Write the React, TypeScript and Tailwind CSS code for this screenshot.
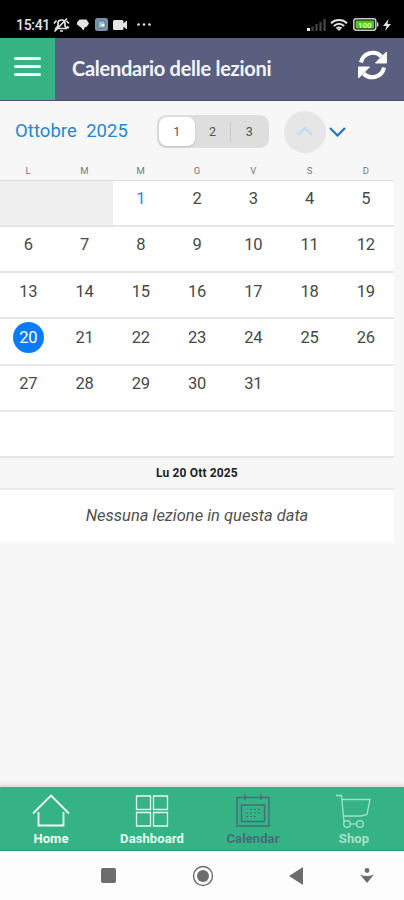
import React, { useState } from 'react';
import clsx from 'clsx';

const WEEKDAYS = ['L', 'M', 'M', 'G', 'V', 'S', 'D'];
const DAYS_IN_MONTH = 31;
const FIRST_OFFSET = 2;
const TODAY = 20;
const ROWS = 6;

const StatusBar = () => (
  <div className="flex h-[38px] shrink-0 items-center bg-black pl-4 pr-[13px] pt-[11px] text-[#e4e4e4]">
    <span className="w-[35px] whitespace-nowrap text-[14px] font-medium leading-none tracking-[-0.3px]">15:41</span>
    {/* muted bell */}
    <svg className="ml-[2px] h-4 w-[18px]" viewBox="0 0 18 16" fill="none" stroke="currentColor" strokeWidth="1.7">
      <path d="M3 11.500h10.500L12 9V6.500C12 4 10.500 3 8.500 3S5 4.500 5 6.500V9zM7 14h3M1.500 14.500 14 1.500M1 6.500l2.500-3M13.500 4l2.500 2.500M14 9.500l2 1.500" />
    </svg>
    <svg className="ml-[6px] h-3 w-3" viewBox="0 0 12 12" fill="currentColor">
      <path d="M2.500.5h7L12 4.500 9.500 8H8l-1.500 3.500L4 8.500 0 5.500V3.500z" />
    </svg>
    <svg className="ml-[6px] h-[13px] w-[13px]" viewBox="0 0 13 13">
      <rect width="13" height="13" rx="2.500" fill="#7595ac" />
      <rect x="3" y="3" width="7" height="7" rx="1.500" fill="#a5bdcb" stroke="#54758c" />
      <rect x="6.500" y="6" width="3" height="2.500" fill="#f1f5f7" />
    </svg>
    <svg className="ml-[5px] h-[10px] w-[15px]" viewBox="0 0 15 10" fill="currentColor">
      <rect width="10.500" height="10" rx="1.500" />
      <path d="m9 4.500 5-4v9l-5-4z" />
    </svg>
    <svg className="ml-[9px] h-[3px] w-[15px]" viewBox="0 0 15 3" fill="currentColor">
      <circle cx="1.500" cy="1.500" r="1.300" />
      <circle cx="7" cy="1.500" r="1.300" />
      <circle cx="12.500" cy="1.500" r="1.300" />
    </svg>

    <svg className="ml-auto h-3 w-[19px]" viewBox="0 0 19 12">
      <rect y="9" width="3" height="3" fill="#eee" />
      <path d="M5.500 12V7.500M9.500 12V5M13.500 12V3M17.500 12V0" stroke="#454545" strokeWidth="2.300" />
    </svg>
    <svg className="ml-1 h-3 w-[18px]" viewBox="0 0 18 12" fill="none" stroke="currentColor" strokeWidth="2">
      <path d="M1 4.200C5.500 0 12.500 0 17 4.200M3.800 7C7 4.200 11 4.200 14.200 7M6.500 9.500c1.500-1.300 3.500-1.300 5 0" />
      <path d="m7 10 2 2 2-2z" fill="currentColor" stroke="none" />
    </svg>
    <svg className="ml-[5px] h-[13px] w-[26px]" viewBox="0 0 26 13">
      <rect x=".8" y=".8" width="22" height="11.400" rx="2.500" fill="#111" stroke="#c9cbc8" strokeWidth="1.500" />
      <rect x="2.500" y="2.500" width="18.500" height="8" rx="1" fill="#4fc61d" />
      <path d="M24 4c2 0 2 5 0 5z" fill="#c9cbc8" />
      <text x="11.800" y="9.500" fontSize="8" fontWeight="700" textAnchor="middle" fill="#d8ffc4">100</text>
    </svg>
    <svg className="ml-1 h-[12px] w-[8px]" viewBox="0 0 8 12" fill="currentColor">
      <path d="M5.500 0 0 7h3.500L2 12l6-7H4.500z" />
    </svg>
  </div>
);

const Header = () => (
  <header className="flex h-[62.500px] shrink-0 items-stretch border-b border-[#4b4f73] bg-[#5a5f80]">
    <button className="flex w-[55px] flex-col items-center justify-center gap-[5px] bg-[#35b382] pb-[5px] text-white">
      <span className="h-[3px] w-[27px] rounded-sm bg-[#effff8]" />
      <span className="h-[3px] w-[27px] rounded-sm bg-[#effff8]" />
      <span className="h-[3px] w-[27px] rounded-sm bg-[#effff8]" />
    </button>
    <h1 className="ml-[17px] self-center whitespace-nowrap pb-[2px] font-['Lato',sans-serif] text-[20px] font-bold tracking-[-0.280px] text-[#f3f5fb]">
      Calendario delle lezioni
    </h1>
    <svg className="ml-auto mr-4 mt-[12px] h-[30px] w-[31px]" viewBox="0 0 31 30" fill="none" stroke="#fff" strokeWidth="4">
      <path d="M4 12.500A12 12 0 0 1 24.500 6.500" />
      <path d="M29.500 2v11H18.500z" fill="#fff" stroke="#fff" strokeWidth="1" strokeLinejoin="round" />
      <path d="M27 17.500A12 12 0 0 1 6.500 23.500" />
      <path d="M1.500 28V17h11z" fill="#fff" stroke="#fff" strokeWidth="1" strokeLinejoin="round" />
    </svg>
  </header>
);

interface ToolbarProps {
  view: number;
  onChangeView: (view: number) => void;
}

const Toolbar: React.FC<ToolbarProps> = ({ view, onChangeView }) => (
  <div className="flex h-[62px] items-center pl-[15px]">
    <span className="w-[142px] whitespace-pre text-[18.500px] tracking-[0.050px] text-[#2686d2]">Ottobre  2025</span>
    <div className="flex h-[33px] w-[112px] items-center rounded-[9px] bg-[#dedede] p-[2px]">
      {[1, 2, 3].map((n) => (
        <button
          key={n}
          onClick={() => onChangeView(n)}
          className={clsx(
            'flex flex-1 items-center justify-center pt-px text-[12.500px] text-[#555]',
            view === n ? 'h-[29px] rounded-[8px] bg-white shadow-sm' : 'h-[20px]',
            n === 3 && 'border-l border-[#c8c8c8]'
          )}
        >
          {n}
        </button>
      ))}
    </div>
    <button className="ml-[15px] flex size-[42px] items-center justify-center rounded-full bg-[#e6e6e6]">
      <svg className="h-[9px] w-4" viewBox="0 0 16 9" fill="none" stroke="#bcdaf6" strokeWidth="2">
        <path d="m1 8 7-7 7 7" />
      </svg>
    </button>
    <button className="ml-[2px] flex size-[18px] items-center justify-center">
      <svg className="h-[10px] w-[17px]" viewBox="0 0 17 10" fill="none" stroke="#1c76d8" strokeWidth="2.300">
        <path d="m1 1 7.500 7.500L16 1" />
      </svg>
    </button>
  </div>
);

const MonthGrid = () => {
  const cells = Array.from({ length: ROWS * 7 }, (_, i) => i - FIRST_OFFSET + 1);

  return (
    <div className="w-[394px]">
      <div className="grid h-[18px] grid-cols-7 border-b border-[#dcdcdc] text-center text-[9.500px] leading-[16px] text-[#777]">
        {WEEKDAYS.map((d, i) => (
          <span key={i}>{d}</span>
        ))}
      </div>
      <div className="grid grid-cols-7 bg-white">
        {cells.map((day) => (
          <div
            key={day}
            className={clsx(
              'flex h-[46.250px] justify-center border-b-2 border-[#e7e7e7] pt-[3px]',
              day < 1 && 'bg-[#efefef]'
            )}
          >
            {day > 0 && day <= DAYS_IN_MONTH && (
              <span
                className={clsx(
                  'flex size-[31px] items-center justify-center rounded-full pt-px text-[16.500px] tracking-[-0.300px]',
                  day === TODAY ? 'bg-[#0b7bfb] text-white' : day === 1 ? 'text-[#2a8cd8]' : 'text-[#484848]'
                )}
              >
                {day}
              </span>
            )}
          </div>
        ))}
      </div>
      <div className="flex h-[32px] items-center justify-center border-b-2 border-[#e9e9e9] text-[12px] font-bold tracking-[0.150px] text-[#222]">
        Lu 20 Ott 2025
      </div>
      <div className="flex h-[52px] items-center justify-center bg-white text-[16.500px] italic text-[#505050]">
        Nessuna lezione in questa data
      </div>
    </div>
  );
};

const TABS = [
  {
    label: 'Home',
    color: 'text-[#f0fff8]',
    stroke: 1.8,
    icon: <path d="M1 19.500 19 1.500 37 19.500M6.500 18v13.500h25V18" />,
  },
  {
    label: 'Dashboard',
    color: 'text-[#e2fbef]',
    stroke: 1.3,
    icon: <path d="M3.500 2h14v13.500h-14zM20.500 2h14v13.500h-14zM3.500 18.500h14V32h-14zM20.500 18.500h14V32h-14z" />,
  },
  {
    label: 'Calendar',
    color: 'text-[#476b78]',
    stroke: 1.4,
    icon: (
      <>
        <path d="M3 3.500h32V32H3zM7.500 11h23v16.500h-23zM11 0v6M27 0v6" />
        <path d="M16 15.500h12M12 19h15M12 22.500h12" strokeDasharray="2 2" strokeWidth="1" />
      </>
    ),
  },
  {
    label: 'Shop',
    color: 'text-[#a4e2c7]',
    stroke: 1.3,
    icon: (
      <>
        <path d="M1 1.500h5.500L9 28M7 5.500h28L32 20.500l-6 1.500H8.500" />
        <circle cx="12" cy="30" r="3.300" />
        <circle cx="25" cy="30" r="3.300" />
        <path d="M15.300 30h6.400" />
      </>
    ),
  },
];

const TabBar = () => (
  <nav className="grid h-[64px] shrink-0 grid-cols-4 border-b border-[#249c70] bg-[#36b385] shadow-[0_-1px_5px_rgba(0,0,0,0.2)]">
    {TABS.map((tab) => (
      <button key={tab.label} className={clsx('flex flex-col items-center pl-px pt-[7px]', tab.color)}>
        <svg
          className="h-[34px] w-[38px] shrink-0"
          viewBox="0 0 38 34"
          fill="none"
          stroke="currentColor"
          strokeWidth={tab.stroke}
        >
          {tab.icon}
        </svg>
        <span className="mt-[2px] text-[13px] font-bold leading-[17px] tracking-[0.100px]">{tab.label}</span>
      </button>
    ))}
  </nav>
);

const SystemNav = () => (
  <div className="flex h-[49px] shrink-0 items-center bg-[#fdfdfd] pl-[100.500px] text-[#6d6d6d]">
    <span className="size-[15px] rounded-[2px] bg-[#6d6d6d]" />
    <svg className="ml-[76px] size-[22px]" viewBox="0 0 22 22">
      <circle cx="11" cy="11" r="9.500" fill="none" stroke="currentColor" strokeWidth="1.400" />
      <circle cx="11" cy="11" r="6" fill="currentColor" />
    </svg>
    <svg className="ml-[75px] h-[18px] w-[14px]" viewBox="0 0 14 18" fill="currentColor">
      <path d="M0 9 14 0v18z" />
    </svg>
    <svg className="ml-[57px] h-[15px] w-[14px]" viewBox="0 0 14 15" fill="currentColor">
      <circle cx="7" cy="2.500" r="2.400" />
      <path d="M0 6.500q7 3 14 0L7 15z" />
    </svg>
  </div>
);

export default function App() {
  const [view, setView] = useState(1);

  return (
    <div className="flex h-[900px] w-[404px] flex-col overflow-hidden bg-[#f7f7f7] font-['Roboto',sans-serif]">
      <StatusBar />
      <Header />
      <main className="flex-1">
        <Toolbar view={view} onChangeView={setView} />
        <MonthGrid />
      </main>
      <TabBar />
      <SystemNav />
    </div>
  );
}
